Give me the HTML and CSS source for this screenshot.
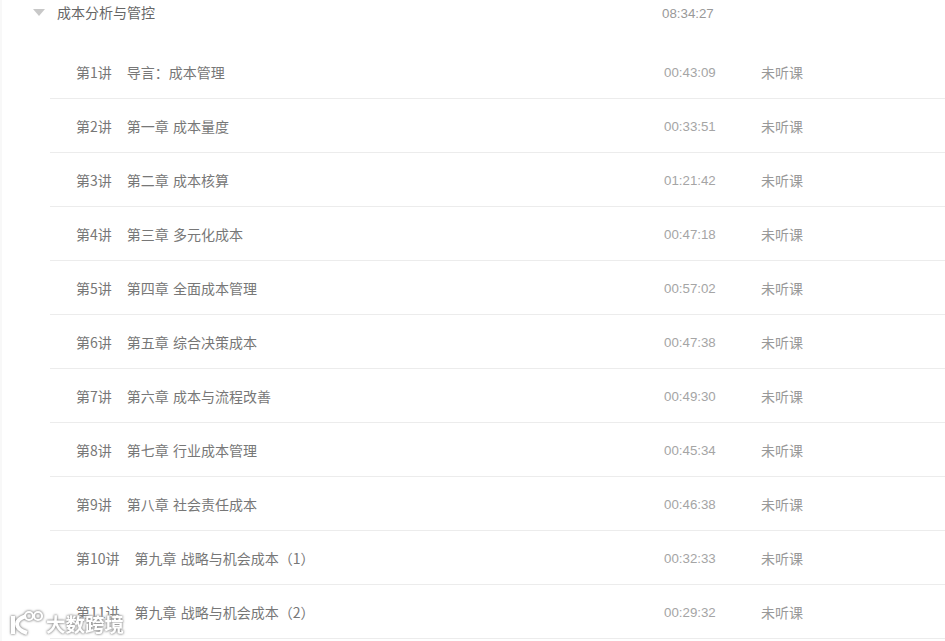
FILE: index.html
```html
<!DOCTYPE html>
<html lang="zh">
<head>
<meta charset="utf-8">
<title>成本分析与管控</title>
<link rel="stylesheet" href="styles.css">
</head>
<body>
<div class="panel">
  <div class="chapter">
    <span class="arrow"></span>
    <span class="chapter-title">成本分析与管控</span>
    <span class="chapter-time">08:34:27</span>
  </div>
  <ul class="list">
    <li class="row"><span class="name"><span class="num">第1讲</span>导言：成本管理</span><span class="time">00:43:09</span><span class="state">未听课</span></li>
    <li class="row"><span class="name"><span class="num">第2讲</span>第一章 成本量度</span><span class="time">00:33:51</span><span class="state">未听课</span></li>
    <li class="row"><span class="name"><span class="num">第3讲</span>第二章 成本核算</span><span class="time">01:21:42</span><span class="state">未听课</span></li>
    <li class="row"><span class="name"><span class="num">第4讲</span>第三章 多元化成本</span><span class="time">00:47:18</span><span class="state">未听课</span></li>
    <li class="row"><span class="name"><span class="num">第5讲</span>第四章 全面成本管理</span><span class="time">00:57:02</span><span class="state">未听课</span></li>
    <li class="row"><span class="name"><span class="num">第6讲</span>第五章 综合决策成本</span><span class="time">00:47:38</span><span class="state">未听课</span></li>
    <li class="row"><span class="name"><span class="num">第7讲</span>第六章 成本与流程改善</span><span class="time">00:49:30</span><span class="state">未听课</span></li>
    <li class="row"><span class="name"><span class="num">第8讲</span>第七章 行业成本管理</span><span class="time">00:45:34</span><span class="state">未听课</span></li>
    <li class="row"><span class="name"><span class="num">第9讲</span>第八章 社会责任成本</span><span class="time">00:46:38</span><span class="state">未听课</span></li>
    <li class="row"><span class="name"><span class="num">第10讲</span>第九章 战略与机会成本（1）</span><span class="time">00:32:33</span><span class="state">未听课</span></li>
    <li class="row"><span class="name"><span class="num">第11讲</span>第九章 战略与机会成本（2）</span><span class="time">00:29:32</span><span class="state">未听课</span></li>
  </ul>
</div>
<div class="watermark">
  <svg class="logo" width="36" height="26" viewBox="0 0 36 26" fill="none" stroke="#fff" stroke-width="4">
    <path d="M3 6V24M16 6C10 8 7 11 7 14C7 18 11 21 17 23"/>
    <circle cx="19" cy="6" r="4" stroke-width="2.2"/>
    <circle cx="28" cy="6" r="4" stroke-width="2.2"/>
  </svg>
  <span class="wm-text">大数跨境</span>
</div>
</body>
</html>
```
FILE: styles.css
```css
* { box-sizing: border-box; }
html, body { margin: 0; padding: 0; background: #fff; overflow: hidden; }
body {
  width: 945px;
  height: 641px;
  font-family: "Noto Sans CJK SC", "Liberation Sans", sans-serif;
  font-size: 14px;
  color: #666;
  position: relative;
}
.panel {
  border-left: 2px solid #f8f8f8;
  height: 641px;
  overflow: hidden;
}
.chapter {
  display: flex;
  align-items: center;
  height: 27px;
  padding-left: 31px;
}
.arrow {
  width: 0;
  height: 0;
  border-left: 6px solid transparent;
  border-right: 6px solid transparent;
  border-top: 7px solid #c8c8c8;
  margin-right: 12px;
  margin-top: -2px;
}
.chapter-title { width: 605px; color: #666; line-height: 22px; margin-top: -4px; }
.chapter-time { color: #999; font-family: "Liberation Sans", sans-serif; font-size: 13.3px; }
.list { list-style: none; margin: 0 0 0 48px; padding: 0; }
.row {
  display: flex;
  align-items: center;
  height: 54px;
  padding-left: 26px;
  border-bottom: 1px solid #ececec;
}
.row:first-child { margin-top: 18px; }
.name { width: 588px; color: #777; line-height: 22px; margin-top: 1px; word-spacing: 1px; }
.num { margin-right: 15px; }
.time { width: 97px; color: #a5a5a5; font-family: "Liberation Sans", sans-serif; font-size: 13.3px; margin-top: 2px; }
.state { color: #999; line-height: 22px; margin-top: 1px; }
.watermark {
  position: absolute;
  left: 10px;
  top: 609px;
  display: flex;
  align-items: center;
  filter: drop-shadow(0 0 1px #888) drop-shadow(0 0 1px #bbb);
}
.wm-text { color: #fff; font-size: 19.5px; font-weight: 700; line-height: 26px; margin-top: 2px; }
```
